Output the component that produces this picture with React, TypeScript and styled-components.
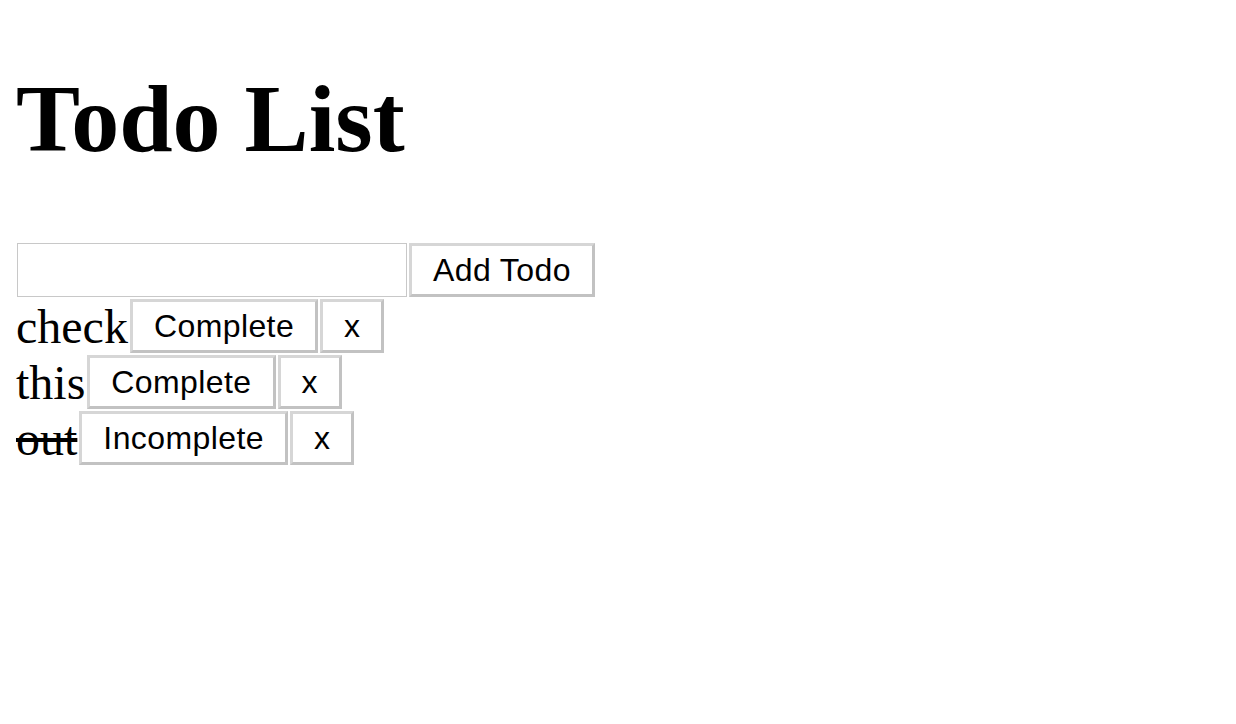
import React, { useState } from "react";
import styled, { createGlobalStyle } from "styled-components";

const GlobalStyle = createGlobalStyle`
  body {
    margin: 0;
    background: #ffffff;
  }
`;

const Page = styled.div`
  padding: 64px 16px 0;
  font-family: "Liberation Serif", "Times New Roman", serif;
  color: #000;
`;

const Title = styled.h1`
  margin: 0 0 69px;
  font-size: 96px;
  line-height: 110px;
  font-weight: bold;
`;

const FormRow = styled.form`
  display: flex;
  align-items: center;
  gap: 2px;
`;

const TodoInput = styled.input`
  box-sizing: border-box;
  width: 390px;
  height: 54px;
  margin: 0 0 0 1px;
  border: 1px solid #c8c8c8;
  outline: none;
  font-size: 28px;
`;

const Button = styled.button`
  box-sizing: border-box;
  height: 54px;
  padding: 0 21px;
  background: #ffffff;
  border: 3px solid;
  border-color: #d6d6d6 #c2c2c2 #c2c2c2 #d6d6d6;
  font-family: "Liberation Sans", Arial, sans-serif;
  font-size: 32px;
  letter-spacing: 0.4px;
  color: #000;
  cursor: pointer;
`;

const List = styled.div`
  display: flex;
  flex-direction: column;
  gap: 2px;
  margin-top: 2px;
`;

const Item = styled.div`
  display: flex;
  align-items: flex-start;
  gap: 2px;
  height: 54px;
`;

const Label = styled.span<{ $done: boolean }>`
  font-size: 48px;
  line-height: 56px;
  text-decoration: ${(p) => (p.$done ? "line-through" : "none")};
`;

type Todo = { id: number; text: string; done: boolean };

export default function App() {
  const [todos, setTodos] = useState<Todo[]>([
    { id: 1, text: "check", done: false },
    { id: 2, text: "this", done: false },
    { id: 3, text: "out", done: true },
  ]);
  const [value, setValue] = useState("");

  const add = (e: React.FormEvent) => {
    e.preventDefault();
    if (!value.trim()) return;
    setTodos([...todos, { id: Date.now(), text: value, done: false }]);
    setValue("");
  };

  return (
    <Page>
      <GlobalStyle />
      <Title>Todo List</Title>
      <FormRow onSubmit={add}>
        <TodoInput value={value} onChange={(e) => setValue(e.target.value)} />
        <Button type="submit">Add Todo</Button>
      </FormRow>
      <List>
        {todos.map((t) => (
          <Item key={t.id}>
            <Label $done={t.done}>{t.text}</Label>
            <Button
              onClick={() =>
                setTodos(todos.map((x) => (x.id === t.id ? { ...x, done: !x.done } : x)))
              }
            >
              {t.done ? "Incomplete" : "Complete"}
            </Button>
            <Button onClick={() => setTodos(todos.filter((x) => x.id !== t.id))}>x</Button>
          </Item>
        ))}
      </List>
    </Page>
  );
}
